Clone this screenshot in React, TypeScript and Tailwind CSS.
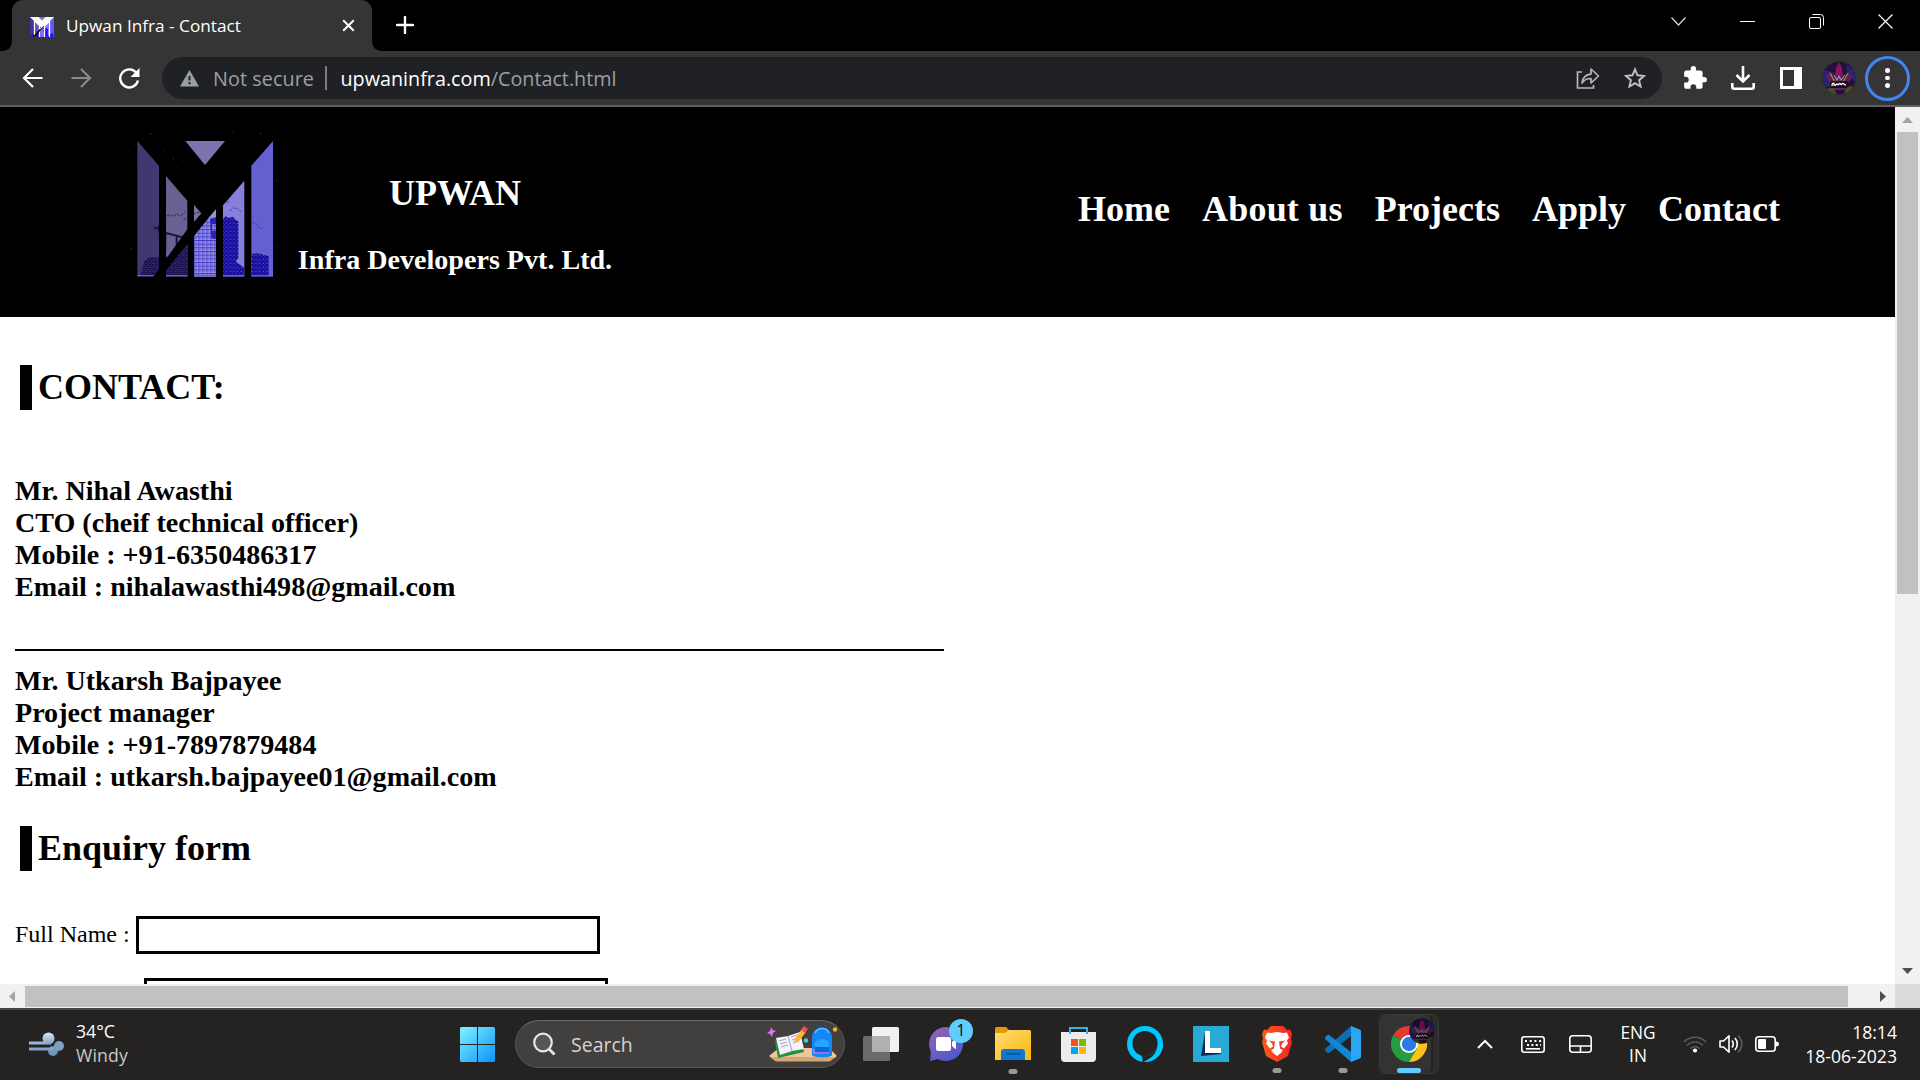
import React from "react";

function Logo({ className, view = "0 0 450 465" }: { className: string; view?: string }) {
  return (
    <svg className={className} viewBox={view} preserveAspectRatio="none">
      <defs>
        <pattern id="win" width="12" height="11" patternUnits="userSpaceOnUse">
          <rect width="12" height="11" fill="#9a94e6" />
          <path d="M0 1h12" stroke="#1c14b4" strokeWidth="2.4" />
          <path d="M2 6h6" stroke="#3a32c4" strokeWidth="2.4" />
          <path d="M1 0v11" stroke="#4a42cc" strokeWidth="2" />
        </pattern>
        <pattern id="winDark" width="11" height="12" patternUnits="userSpaceOnUse">
          <rect width="11" height="12" fill="#150c9c" />
          <path d="M2 4h4M8 9h2" stroke="#6a62d4" strokeWidth="3" />
        </pattern>
        <pattern id="winNight" width="11" height="12" patternUnits="userSpaceOnUse">
          <rect width="11" height="12" fill="#1b1250" />
          <path d="M2 4h4M7 10h3" stroke="#544b90" strokeWidth="2.5" />
        </pattern>
        <clipPath id="pillars">
          <path d="M22 33L87 108V440H22ZM108 138L172 212V440H108ZM192 225L214 250L192 276ZM258 236V440H192V306ZM343 152V440H279V226ZM429 33V440H364V107Z" />
        </clipPath>
      </defs>
      <path d="M166 33H285L225 105Z" fill="#7b73ab" />
      <path d="M22 33L87 108V440H22Z" fill="#42376f" />
      <path d="M108 138L172 212V440H108Z" fill="#6b6092" />
      <path d="M192 225L214 250L192 276Z" fill="#7d739f" />
      <path d="M258 236V440H192V306Z" fill="#958ddd" />
      <path d="M343 152V440H279V226Z" fill="#8680da" />
      <path d="M429 33V440H364V107Z" fill="#6460cf" />
      <g clipPath="url(#pillars)">
        <path d="M192 300l14-16 8-12 8 4 6-12 12 6 18-4v180h-66z" fill="url(#win)" />
        <path d="M240 266l18-4v20h-12v20h12v24h-14z" fill="#2a22b8" />
        <path d="M279 268l8-10 8 6 14-4 8 10 8 4v110l-8 10 26 20v26h-64z" fill="url(#winDark)" />
        <path d="M364 372l18-2 34 8v62h-52z" fill="url(#winDark)" />
        <path d="M44 392l14-10h30v58H30l6-26z" fill="url(#winNight)" />
        <path d="M108 380l30-4 12-22 22-12v98H90v-40z" fill="url(#winNight)" />
        <path d="M72 296l12-4 4 12 64 16 12 2M106 312v50M140 316v56" stroke="#1d1440" strokeWidth="6" fill="none" />
        <path d="M110 258l12-4 8 6 10-8 12 6 14-12M160 268l20-4 12-14 18-4" stroke="#352b63" strokeWidth="3" fill="none" strokeDasharray="9 3" />
        <path d="M280 222l18-8M300 242l10-8 14 2 10 10M366 276l14 6 6 12 14 2" stroke="#4740b8" strokeWidth="3" fill="none" strokeDasharray="8 3" />
        <path d="M22 437H429" stroke="#6d65ac" strokeWidth="4" />
      </g>
      <path d="M258 212L64 448H86L262 232Z" fill="#000" />
      <path d="M172 298L70 440H90L192 308V276Z" fill="#000" />
      <path
        d="M60 10h4v4h-4zM175 12h3v3h-3zM308 5h4v4h-4zM320 20h3v3h-3zM100 60h3v3h-3zM128 84h4v4h-4zM345 64h3v3h-3zM140 112h3v3h-3zM250 120h3v3h-3zM310 128h3v3h-3zM208 150h3v3h-3zM240 176h3v3h-3zM12 44h3v3h-3zM8 170h4v3h-4zM438 150h4v4h-4zM440 350h3v3h-3zM2 355h4v4h-4zM390 8h4v5h-4zM280 448h4v4h-4zM10 438h3v3h-3z"
        fill="#292929"
      />
    </svg>
  );
}

function Avatar({ className }: { className: string }) {
  return (
    <svg className={className} viewBox="0 0 34 34">
      <defs>
        <clipPath id="disc"><circle cx="17" cy="17" r="16.6" /></clipPath>
      </defs>
      <g clipPath="url(#disc)">
        <rect width="34" height="34" fill="#24103a" />
        <path d="M0 8l12 4-4 14H0zM24 3l10 8v10l-8-6z" fill="#28236b" />
        <path d="M17 1l3 6 1 8h-8l1-8z" fill="#8a145c" />
        <path d="M3 15l6-4 2 6 6-3 6 3 3-6 5 5-5 6H8z" fill="#56205f" />
        <path d="M8 12l5 9M26 12l-5 9" stroke="#b9812d" strokeWidth="1.4" />
        <path d="M12 14l3 5 2-4 2 4 4-5" stroke="#a58bb0" strokeWidth="1.1" fill="none" />
        <path d="M5 28l6-2 4 8H6zM24 26l7-1-5 9h-4z" fill="#45521d" />
        <rect x="8" y="20" width="18" height="7" rx="2" fill="#171019" />
        <path d="M10 25c0-4 3-3 2-1 2 1 2-1 3-1s1 2 2 0 2 2 3 0 2 1 4 1" stroke="#fff" strokeWidth="1.3" fill="none" />
        <path d="M12 28h11" stroke="#92177f" strokeWidth="1.5" />
      </g>
    </svg>
  );
}

function TitleBar() {
  return (
    <div className="flex h-[51px] shrink-0 bg-black">
      <div className="flex h-[51px] w-[12px] shrink-0 items-end justify-end">
        <div className="h-[9px] w-[9px] bg-[radial-gradient(circle_at_0_0,transparent_8.5px,#353535_9px)]" />
      </div>
      <div className="flex h-[51px] w-[360px] shrink-0 items-center rounded-t-[11px] bg-[#353535]">
        <div className="ml-[18px] mt-[2px] h-[20px] w-[24px] bg-white">
          <Logo className="h-full w-full saturate-200" view="22 33 407 407" />
        </div>
        <span className="ml-[12px] w-[276px] whitespace-nowrap pt-px text-[17.2px] text-white">Upwan Infra - Contact</span>
        <svg className="h-[13px] w-[13px]" viewBox="0 0 13 13">
          <path d="M1.2 1.2l10.6 10.6M11.8 1.2L1.2 11.8" stroke="#fff" strokeWidth="2" />
        </svg>
      </div>
      <div className="flex h-[51px] w-[9px] shrink-0 items-end">
        <div className="h-[9px] w-[9px] bg-[radial-gradient(circle_at_100%_0,transparent_8.5px,#353535_9px)]" />
      </div>
      <svg className="ml-[15px] mt-[16px] h-[18px] w-[18px]" viewBox="0 0 18 18">
        <path d="M9 1v16M1 9h16" stroke="#fff" strokeWidth="2.4" strokeLinecap="round" />
      </svg>
      <div className="ml-auto mr-[27px] mt-[14px] flex gap-[54px]">
        <svg className="h-[15px] w-[15px]" viewBox="0 0 15 15" fill="none" stroke="#d8d8d8" strokeWidth="1.2"><path d="M.5 3.500l7 7.500 7-7.500" /></svg>
        <svg className="h-[15px] w-[15px]" viewBox="0 0 15 15"><path d="M0 7.500h15" stroke="#fff" /></svg>
        <svg className="h-[15px] w-[15px]" viewBox="0 0 15 15" fill="none" stroke="#fff">
          <rect x=".5" y="3.500" width="11" height="11" rx="1.500" />
          <path d="M3.500.5h8a3 3 0 0 1 3 3v8" />
        </svg>
        <svg className="h-[15px] w-[15px]" viewBox="0 0 15 15"><path d="M.5.5l14 14M14.500.5l-14 14" stroke="#fff" strokeWidth="1.200" /></svg>
      </div>
    </div>
  );
}

function Toolbar() {
  return (
    <div className="flex h-[56px] shrink-0 items-center border-b-2 border-[#606060] bg-[#353535]">
      <svg className="ml-[22px] h-[22px] w-[22px]" viewBox="0 0 22 22" fill="none" stroke="#fff" strokeWidth="2.2">
        <path d="M20.500 11H2.500M11 2l-9 9 9 9" />
      </svg>
      <svg className="ml-[26px] h-[22px] w-[22px]" viewBox="0 0 22 22" fill="none" stroke="#8a8a8a" strokeWidth="2.2">
        <path d="M1.500 11H19.500M11 2l9 9-9 9" />
      </svg>
      <svg className="ml-[26px] h-[22px] w-[22px]" viewBox="0 0 22 22" fill="none" stroke="#fff" strokeWidth="2.4">
        <path d="M18.600 6.200A9 9 0 1 0 20 13.500" />
        <path d="M21.500 1v9h-9z" fill="#fff" stroke="none" />
      </svg>
      <div className="ml-[22px] flex h-[42px] w-[1500px] items-center rounded-full bg-[#202124] text-[19.750px]">
        <svg className="ml-[18px] h-[17px] w-[19px]" viewBox="0 0 19 17">
          <path d="M9.500 0L19 16.500H0z" fill="#9aa0a6" />
          <path d="M9.500 6v4.500M9.500 12v2.200" stroke="#202124" strokeWidth="2" />
        </svg>
        <span className="ml-[14px] w-[112px] whitespace-nowrap pt-[2px] tracking-[0.080px] text-[#9aa0a6]">Not secure</span>
        <div className="h-[24px] w-[1.500px] bg-[#7b7f84]" />
        <span className="ml-[14px] whitespace-nowrap pt-[2px] text-[#9aa0a6]"><span className="text-white">upwaninfra.com</span>/Contact.html</span>
        <svg className="ml-auto h-[22px] w-[24px]" viewBox="0 0 24 22" fill="none" stroke="#b4b6b9" strokeWidth="1.7">
          <path d="M6 5H1.500v16h16v-3" />
          <path d="M6 16c.8-6 4-8.600 9-8.900V2l7.500 7-7.500 7v-4.500c-4-.1-6.600 1.200-9 4.500z" strokeLinejoin="round" />
        </svg>
        <svg className="ml-[24px] mr-[16px] h-[22px] w-[22px]" viewBox="0 0 22 22" fill="none" stroke="#c0c2c4" strokeWidth="1.900">
          <path d="M11 2.300l2.500 6 6.500.6-4.900 4.300 1.500 6.400-5.600-3.400-5.600 3.400 1.500-6.400L2 8.900l6.500-.6z" />
        </svg>
      </div>
      <svg className="ml-[20px] h-[26px] w-[26px]" viewBox="0 0 24 24" fill="#fff">
        <path d="M20.500 11H19V7c0-1.100-.9-2-2-2h-4V3.500a2.500 2.500 0 0 0-5 0V5H4c-1.100 0-2 .9-2 2v3.800h1.500a2.700 2.700 0 0 1 0 5.400H2V20c0 1.100.9 2 2 2h3.800v-1.500a2.700 2.700 0 0 1 5.400 0V22H17c1.100 0 2-.9 2-2v-4h1.500a2.500 2.500 0 0 0 0-5z" />
      </svg>
      <svg className="ml-[23px] h-[24px] w-[24px]" viewBox="0 0 24 24" fill="none" stroke="#fff" strokeWidth="2.600">
        <path d="M12 0v15M5.500 9l6.500 6.500L18.500 9M1.300 17v3.700a2 2 0 0 0 2 2h17.400a2 2 0 0 0 2-2V17" />
      </svg>
      <svg className="ml-[25px] h-[22px] w-[22px]" viewBox="0 0 22 22">
        <rect width="22" height="22" fill="#fff" />
        <rect x="3" y="3" width="11" height="16" fill="#353535" />
      </svg>
      <Avatar className="ml-[20px] h-[34px] w-[34px]" />
      <div className="ml-[9px] flex h-[45px] w-[45px] flex-col items-center justify-center gap-[3px] rounded-full border-[3px] border-[#4285f4]">
        <div className="h-[4.500px] w-[4.500px] rounded-full bg-white" />
        <div className="h-[4.500px] w-[4.500px] rounded-full bg-white" />
        <div className="h-[4.500px] w-[4.500px] rounded-full bg-white" />
      </div>
    </div>
  );
}

function Person({ lines }: { lines: string[] }) {
  return (
    <div className="text-[28.080px] font-bold leading-[32px]">
      {lines.map((l) => (
        <div key={l} className="whitespace-nowrap">{l}</div>
      ))}
    </div>
  );
}

function SectionTitle({ text }: { text: string }) {
  return (
    <h2 className="ml-[5px] border-l-[12px] border-black pl-[6px] text-[36px] font-bold leading-[45px]">{text}</h2>
  );
}

function Page() {
  return (
    <div className="h-[877px] w-[1895px] overflow-hidden bg-white font-['Liberation_Serif',serif] text-black">
      <header className="flex h-[210px] bg-black font-bold text-white">
        <Logo className="ml-[130px] mt-[23px] h-[155px] w-[150px]" />
        <div className="ml-[18px] mt-[66px] flex w-[314px] flex-col items-center gap-[30px] whitespace-nowrap">
          <div className="text-[36px] leading-[41px]">UPWAN</div>
          <div className="text-[28.080px] leading-[32px]">Infra Developers Pvt. Ltd.</div>
        </div>
        <nav className="ml-auto mr-[115px] mt-[82px] flex gap-[32px] text-[36px] leading-[41px]">
          <a>Home</a>
          <a className="tracking-[0.200px]">About us</a>
          <a>Projects</a>
          <a>Apply</a>
          <a>Contact</a>
        </nav>
      </header>
      <main className="pl-[15px] pt-[48px]">
        <SectionTitle text="CONTACT:" />
        <div className="h-[65px]" />
        <Person lines={["Mr. Nihal Awasthi", "CTO (cheif technical officer)", "Mobile : +91-6350486317", "Email : nihalawasthi498@gmail.com"]} />
        <div className="mb-[14px] mt-[46px] h-[2px] w-[929px] bg-black" />
        <Person lines={["Mr. Utkarsh Bajpayee", "Project manager", "Mobile : +91-7897879484", "Email : utkarsh.bajpayee01@gmail.com"]} />
        <div className="h-[33px]" />
        <SectionTitle text="Enquiry form" />
        <div className="mt-[45px] flex h-[38px] text-[24px] leading-[36px]">
          <label className="w-[121px] whitespace-nowrap">Full Name :</label>
          <div className="w-[464px] border-[3px] border-black" />
        </div>
        <div className="ml-[129px] mt-[24px] h-[38px] w-[464px] border-[3px] border-black" />
      </main>
    </div>
  );
}

function VerticalScrollbar() {
  return (
    <div className="flex h-[877px] w-[25px] flex-col items-center bg-[#f1f1f1]">
      <svg className="mt-[10px] h-[6px] w-[11px]" viewBox="0 0 11 6"><path d="M5.500 0L11 6H0z" fill="#a3a3a3" /></svg>
      <div className="mt-[9px] h-[462px] w-[21px] bg-[#c1c1c1]" />
      <svg className="mb-[10px] mt-auto h-[6px] w-[11px]" viewBox="0 0 11 6"><path d="M5.500 6L11 0H0z" fill="#505050" /></svg>
    </div>
  );
}

function HorizontalScrollbar() {
  return (
    <div className="flex h-[24px] shrink-0 bg-[#dcdcdc]">
      <div className="flex w-[1895px] items-center bg-[#f1f1f1]">
        <svg className="ml-[9px] h-[11px] w-[6px]" viewBox="0 0 6 11"><path d="M0 5.500L6 0v11z" fill="#a3a3a3" /></svg>
        <div className="ml-[10px] mt-px h-[21px] w-[1823px] bg-[#c1c1c1]" />
        <svg className="ml-[32px] h-[11px] w-[6px]" viewBox="0 0 6 11"><path d="M6 5.500L0 0v11z" fill="#505050" /></svg>
      </div>
    </div>
  );
}

function SearchBox() {
  return (
    <div className="ml-[20px] flex h-[48px] w-[330px] items-center rounded-full border border-[#565553] border-t-[#6a6967] bg-[#41403e]">
      <svg className="ml-[16px] h-[24px] w-[24px]" viewBox="0 0 24 24" fill="none" stroke="#e2e5ea" strokeWidth="2.200">
        <circle cx="11" cy="10.500" r="8.800" fill="#555" />
        <path d="M17 17l5.500 5.500" strokeWidth="2.800" />
      </svg>
      <span className="ml-[15px] pt-px text-[19.500px] text-[#d4d3d2]">Search</span>
      <svg className="ml-auto mr-[5px] mt-[2px] h-[40px] w-[72px]" viewBox="0 0 72 40">
        <path d="M2 31l10-8h50l8 8-7 5H9z" fill="#f1c799" />
        <path d="M3 32h66l-7 4.500H9z" fill="#d6a574" />
        <path d="M8 16l25-7 4 18-26 6z" fill="#24913c" />
        <path d="M9 13l12-2 12-4 4 17-12 2-12 4z" fill="#f4f2fb" />
        <path d="M21 11l4 15M12 16l7-2M13 19l7-2M14 22l7-2M24 12l6-2M25 15l7-2M26 18l6-2" stroke="#a9a2c4" strokeWidth="1" />
        <path d="M27 17l2-5 6-8 4 3-7 9z" fill="#ffb52e" />
        <path d="M34 5l3-4 4 3-3 4z" fill="#f0524b" />
        <path d="M51 3c0-6 8-6 8 0" stroke="#0b4fc2" strokeWidth="2" fill="none" />
        <path d="M45 13c0-14 20-14 20 0v17c0 3-20 3-20 0z" fill="#1587f5" />
        <path d="M48 8c3-6 11-6 14 0" stroke="#5bc2ff" strokeWidth="1.500" fill="none" />
        <path d="M48 22c0-8 14-8 14 0v7H48z" fill="#0766dd" />
        <path d="M48 18c2-5 12-5 14 0v4H48z" fill="#25a5ff" />
        <path d="M47 24v4h15" stroke="#c27af6" strokeWidth="1.500" fill="none" />
        <path d="M4 2l1.600 3 3.400 1-3 2-1 4-2-3-3-1 3-2z" fill="#e071f5" />
        <circle cx="39" cy="15.500" r="2.200" fill="#4dc9d1" />
        <circle cx="68" cy="4.500" r="2.200" fill="#fbb023" />
      </svg>
    </div>
  );
}

function Running({ children, className }: { children: React.ReactNode; className: string }) {
  return (
    <div className={className}>
      {children}
      <div className="absolute left-1/2 top-[42px] h-[5px] w-[9px] -translate-x-1/2 rounded-full bg-[#9a9998]" />
    </div>
  );
}

function Taskbar() {
  return (
    <div className="flex h-[72px] shrink-0 items-center border-t-2 border-[#454744] bg-[#242321] pb-[2px] text-white">
      <svg className="ml-[29px] h-[25px] w-[35px]" viewBox="0 0 35 25">
        <defs>
          <linearGradient id="wind" x2="0" y2="1"><stop stopColor="#dce5f6" /><stop offset="1" stopColor="#7f9fc9" /></linearGradient>
        </defs>
        <circle cx="24" cy="19" r="5" fill="#7095b6" />
        <circle cx="30" cy="14" r="5" fill="#7f9fc0" />
        <path d="M0 17h25" stroke="#86a2ce" strokeWidth="3" />
        <path d="M0 11h22" stroke="#9db5dc" strokeWidth="3" />
        <circle cx="19.500" cy="6.500" r="6" fill="url(#wind)" />
      </svg>
      <div className="ml-[12px] w-[384px] pb-[2px] text-[17.700px] leading-[24px]">
        <div>34°C</div>
        <div className="tracking-[0.150px] text-[#c9c8c7]">Windy</div>
      </div>
      <svg className="h-[35px] w-[35px]" viewBox="0 0 35 35">
        <defs>
          <linearGradient id="start" x2="1" y2="1"><stop stopColor="#80f3ff" /><stop offset="1" stopColor="#0a93fb" /></linearGradient>
        </defs>
        <path d="M1.500 0H17v17H0V1.500A1.500 1.500 0 0 1 1.500 0zM18 0h15.500A1.500 1.500 0 0 1 35 1.500V17H18zM0 18h17v17H1.500A1.500 1.500 0 0 1 0 33.500zM18 18h17v15.500a1.500 1.500 0 0 1-1.500 1.500H18z" fill="url(#start)" />
      </svg>
      <SearchBox />
      <svg className="ml-[18px] h-[34px] w-[36px]" viewBox="0 0 36 34">
        <rect y="9" width="27" height="25" rx="1.500" fill="#6b6b6b" />
        <rect x="9" width="27" height="25" rx="1.500" fill="#f1f1f1" />
        <path d="M9 9h18v16H9z" fill="#b0b0b0" />
      </svg>
      <div className="relative ml-[30px] h-[34px] w-[34px]">
        <svg className="h-[34px] w-[34px]" viewBox="0 0 34 34">
          <defs>
            <linearGradient id="chat" x2=".6" y2="1"><stop stopColor="#9a66b0" /><stop offset="1" stopColor="#5058d0" /></linearGradient>
          </defs>
          <path d="M17 0a17 17 0 1 1-8 32L1 34l1-9A17 17 0 0 1 17 0z" fill="url(#chat)" />
          <rect x="7" y="10" width="15" height="14" rx="2.500" fill="#fff" />
          <path d="M23 15l4-3.500v11L23 19z" fill="#fff" />
        </svg>
        <div className="absolute -top-[8px] left-[20px] flex h-[24px] w-[24px] items-center justify-center rounded-full bg-[#60cdff] text-[15.500px] text-black">1</div>
      </div>
      <Running className="relative ml-[32px] h-[34px] w-[36px]">
        <svg className="h-[34px] w-[36px]" viewBox="0 0 36 34">
          <defs>
            <linearGradient id="folder" x2="1" y2="1"><stop stopColor="#ffdc74" /><stop offset="1" stopColor="#fab70e" /></linearGradient>
          </defs>
          <path d="M0 1.500A1.500 1.500 0 0 1 1.500 0H11l4 4v4H0z" fill="#df9c03" />
          <path d="M0 6h10l4-3h20.500A1.500 1.500 0 0 1 36 4.500V33H0z" fill="url(#folder)" />
          <path d="M6 33v-8a3 3 0 0 1 3-3h18a3 3 0 0 1 3 3v8z" fill="#1078d1" />
          <path d="M11 27h14" stroke="#0a4f98" strokeWidth="1.500" />
        </svg>
      </Running>
      <svg className="ml-[30px] h-[35px] w-[35px]" viewBox="0 0 35 35">
        <path d="M0 5h35v26a4 4 0 0 1-4 4H4a4 4 0 0 1-4-4z" fill="#ececec" />
        <path d="M9 7V1h17v6" stroke="#35b2ee" strokeWidth="2" fill="none" />
        <path d="M10 12h7v7h-7z" fill="#f25022" /><path d="M18 12h7v7h-7z" fill="#7fba00" />
        <path d="M10 20h7v7h-7z" fill="#00a4ef" /><path d="M18 20h7v7h-7z" fill="#ffb900" />
      </svg>
      <svg className="ml-[31px] h-[36px] w-[36px]" viewBox="0 0 36 36">
        <circle cx="18" cy="18" r="18" fill="#00c8ff" />
        <circle cx="18" cy="17.500" r="12.600" fill="#242321" />
        <path d="M15.400 36v-4c0-1-.5-1.600-1.600-2.200l3.200.5c7 0 11.500-4 13.500-9.500C29 28 24 33 16.500 36z" fill="#242321" />
        <path d="M31.500 18c0 8-6 14-14.500 17.900 10 .6 19-7 19-17.900z" fill="#00c8ff" />
      </svg>
      <svg className="ml-[30px] h-[36px] w-[36px]" viewBox="0 0 36 36">
        <path d="M0 0h36v36H0z" fill="#27abd6" />
        <path d="M12 6L8 30l4-3zM8 30l4-3h16v1z" fill="#0a2b60" />
        <path d="M12 5h5v17h11v5H12z" fill="#fff" />
      </svg>
      <Running className="relative ml-[32px] h-[36px] w-[32px]">
        <svg className="h-[36px] w-[32px]" viewBox="0 0 32 36">
          <defs>
            <linearGradient id="brave" x2="1" y2="0"><stop stopColor="#ff5a14" /><stop offset="1" stopColor="#f5232b" /></linearGradient>
          </defs>
          <path d="M10 0h12l4 4 3-.5L31 8l-1 5 1 3-4 14-11 6L5 30 1 16l1-3-1-5 2-4.500L6 4z" fill="url(#brave)" />
          <path d="M10 7l6-1 6 1 4-.5 2 5-2 3 1 3-4 5-3-2 1-3 3-3-6 1 1 7 3 2-6 4-6-4 3-2 1-7-6-1 3 3 1 3-3 2-4-5 1-3-2-3 2-5z" fill="#fff" />
          <path d="M11 26l5-2.500 5 2.500-5 4z" fill="#fff" />
        </svg>
      </Running>
      <Running className="relative ml-[32px] h-[36px] w-[36px]">
        <svg className="h-[36px] w-[36px]" viewBox="0 0 36 36">
          <path d="M26 0v10L4.500 26.800c-.8.500-1.500.4-2.200-.1L.6 25.200c-.8-.8-.8-1.900 0-2.700z" fill="#0a6fb5" />
          <path d="M26 36V26L4.500 9.200c-.8-.5-1.500-.4-2.200.1L.6 10.800c-.8.800-.8 1.900 0 2.700z" fill="#1286d2" />
          <path d="M26 0l8.500 3.500c1 .5 1.500 1 1.500 2v25c0 1-.5 1.500-1.500 2L26 36z" fill="#2ba6f4" />
        </svg>
      </Running>
      <div className="relative ml-[18px] h-[60px] w-[60px] rounded-[7px] border border-[#3a3937] bg-[#2d2c2a]">
        <div className="flex h-[58px] w-[53px] flex-col items-center rounded-[7px] border-r-2 border-[#242321] bg-[#343331] pt-[11px]">
          <svg className="ml-[7px] h-[36px] w-[36px] shrink-0" viewBox="0 0 36 36">
            <path d="M18 18L2.400 9A18 18 0 0 1 33.600 9z" fill="#e33b2e" />
            <path d="M18 18L2.400 9A18 18 0 0 0 18 36l8-13.500z" fill="#259b43" />
            <path d="M18 9h15.600A18 18 0 0 1 18 36l8-13.500z" fill="#fcc419" />
            <circle cx="18" cy="18" r="9" fill="#fff" />
            <circle cx="18" cy="18" r="7.200" fill="#2a7bea" />
          </svg>
          <div className="ml-[6px] mt-[6px] h-[5px] w-[24px] shrink-0 rounded-full bg-[#60cdff]" />
        </div>
        <Avatar className="absolute left-[29px] top-[3px] h-[26px] w-[26px] brightness-75" />
      </div>
      <svg className="ml-[38px] h-[10px] w-[16px]" viewBox="0 0 16 10"><path d="M1 9l7-7 7 7" fill="none" stroke="#fff" strokeWidth="2" /></svg>
      <svg className="ml-[28px] h-[17px] w-[24px]" viewBox="0 0 24 17" fill="none" stroke="#fff" strokeWidth="1.600">
        <rect x=".8" y=".8" width="22.400" height="15.400" rx="2.500" />
        <path d="M4 5h17" strokeWidth="2" strokeDasharray="2 2.700" />
        <path d="M6 9h14" strokeWidth="2" strokeDasharray="2 2.400" />
        <path d="M5 12.800h14" />
      </svg>
      <svg className="ml-[24px] h-[18px] w-[23px]" viewBox="0 0 23 18" fill="none" stroke="#fff" strokeWidth="1.600">
        <rect x=".8" y=".8" width="21.400" height="16.400" rx="3" />
        <path d="M1 11h21M11.500 11v6" />
      </svg>
      <div className="ml-[26px] w-[40px] text-center text-[17.300px] leading-[23px]">
        <div>ENG</div>
        <div>IN</div>
      </div>
      <svg className="ml-[25px] h-[18px] w-[24px]" viewBox="0 0 24 18" fill="none" stroke="#5b5a58" strokeWidth="1.600">
        <path d="M1 7a15 15 0 0 1 22 0M4 10.500a11 11 0 0 1 16 0M7.500 13.500a6.500 6.500 0 0 1 9 0" />
        <circle cx="12" cy="15.500" r="2.100" fill="#fff" stroke="none" />
      </svg>
      <svg className="ml-[12px] h-[20px] w-[25px]" viewBox="0 0 25 20" fill="none" stroke="#fff" strokeWidth="1.600">
        <path d="M1 7h3.500L10 1.800v16.400L4.500 13H1z" strokeLinejoin="round" />
        <path d="M13 6.500c1.500 2 1.500 5 0 7M16 4c3 3.500 3 8.500 0 12" />
        <path d="M19 1.500c5 5 5 12 0 17" stroke="#5b5a58" />
      </svg>
      <svg className="ml-[11px] h-[16px] w-[24px]" viewBox="0 0 24 16">
        <rect x=".8" y=".8" width="19.400" height="14.400" rx="3" fill="none" stroke="#fff" strokeWidth="1.600" />
        <rect x="3" y="3" width="8" height="10" rx="1" fill="#fff" />
        <path d="M21 5.500c4 0 4 5 0 5z" fill="#fff" />
      </svg>
      <div className="ml-auto mr-[23px] text-right text-[17.600px] leading-[24px]">
        <div>18:14</div>
        <div>18-06-2023</div>
      </div>
    </div>
  );
}

export default function App() {
  return (
    <div className="flex h-[1080px] w-[1920px] flex-col overflow-hidden bg-black font-['Open_Sans','Noto_Sans',sans-serif]">
      <TitleBar />
      <Toolbar />
      <div className="flex h-[877px] shrink-0">
        <Page />
        <VerticalScrollbar />
      </div>
      <HorizontalScrollbar />
      <Taskbar />
    </div>
  );
}
